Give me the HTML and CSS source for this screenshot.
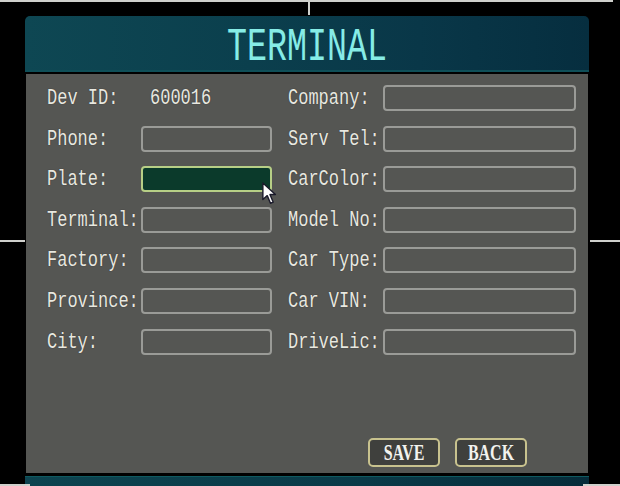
FILE: index.html
```html
<!DOCTYPE html>
<html>
<head>
<meta charset="utf-8">
<link rel="stylesheet" href="styles.css">
</head>
<body>
<div class="screen">
  <div class="panel">
    <div class="header"><span class="title">TERMINAL</span></div>
    <div class="body">
      <div class="form">
        <span class="label">Dev ID:</span><span class="value">600016</span>
        <span class="label">Company:</span><span class="box"></span>

        <span class="label">Phone:</span><span class="box"></span>
        <span class="label">Serv Tel:</span><span class="box"></span>

        <span class="label">Plate:</span><span class="box focus"></span>
        <span class="label">CarColor:</span><span class="box"></span>

        <span class="label">Terminal:</span><span class="box"></span>
        <span class="label">Model No:</span><span class="box"></span>

        <span class="label">Factory:</span><span class="box"></span>
        <span class="label">Car Type:</span><span class="box"></span>

        <span class="label">Province:</span><span class="box"></span>
        <span class="label">Car VIN:</span><span class="box"></span>

        <span class="label">City:</span><span class="box"></span>
        <span class="label">DriveLic:</span><span class="box"></span>
      </div>
      <div class="actions">
        <button class="btn"><span>SAVE</span></button>
        <button class="btn"><span>BACK</span></button>
      </div>
    </div>
    <div class="footer"></div>
  </div>

  <div class="line top"></div>
  <div class="line vtop"></div>
  <div class="line hleft"></div>
  <div class="line hright"></div>
  <div class="line bleft"></div>
  <div class="line bright"></div>

  <svg class="cursor" width="19" height="24" viewBox="0 0 16 22">
    <path d="M1 1 L1 16 L5 12.5 L8 19.5 L10.5 18.5 L7.5 11.5 L12.5 11.5 Z" fill="#ffffff" stroke="#1a1a2a" stroke-width="1.3" stroke-linejoin="round"/>
  </svg>
</div>
</body>
</html>
```

FILE: styles.css
```css
* { box-sizing: border-box; }
html, body {
  margin: 0;
  padding: 0;
  background: #000;
  width: 620px;
  height: 486px;
  overflow: hidden;
}
.screen {
  position: relative;
  width: 620px;
  height: 486px;
  padding: 16px 31px 0 25px;
}
.panel {
  display: flex;
  flex-direction: column;
  width: 564px;
}
.header {
  height: 56px;
  border-radius: 5px 5px 0 0;
  background: linear-gradient(90deg, #0e4753 0%, #0b3f4d 40%, #093748 70%, #062e3f 100%);
  box-shadow: inset 0 -2px 0 #0f4f58;
  display: flex;
  justify-content: center;
  align-items: center;
}
.title {
  display: inline-block;
  font-family: "Liberation Mono", monospace;
  font-size: 33.3px;
  line-height: 1;
  color: #86ece6;
  transform: scaleY(1.4);
  margin-top: 10px;
}
.body {
  margin-top: 2px;
  margin-left: 1px;
  width: 562px;
  height: 399px;
  background: #555653;
  display: flex;
  flex-direction: column;
  padding: 11px 0 6px 21px;
}
.form {
  display: grid;
  grid-template-columns: 94px 131px 111px 193px;
  grid-auto-rows: 26px;
  row-gap: 14.6px;
}
.form > :nth-child(4n+3) { margin-left: 16px; }
.label, .value {
  font-family: "Liberation Mono", monospace;
  font-size: 17px;
  color: #e8e8e0;
  display: flex;
  align-items: center;
  white-space: nowrap;
  text-shadow: 0 0 1px #2a2a2a;
  transform: scaleY(1.27);
}
.value { padding-left: 9px; }
.box {
  border: 2px solid #9a9b97;
  border-radius: 4px;
  background: #555653;
}
.box.focus {
  background: #0b3a2b;
  border-color: #b7cf86;
}
.actions {
  margin-top: auto;
  display: flex;
  gap: 15px;
  padding-left: 321px;
}
.btn {
  width: 72px;
  height: 29px;
  border: 2px solid #c8c28e;
  border-radius: 5px;
  background: #3f403d;
  color: #f2f2ee;
  font-family: "Liberation Serif", serif;
  font-weight: bold;
  font-size: 16px;
  padding: 0;
  display: flex;
  align-items: center;
  justify-content: center;
}
.btn span {
  display: inline-block;
  transform: scaleY(1.4);
  line-height: 1;
  margin-top: 1px;
}
.footer {
  margin-top: 3px;
  height: 12px;
  background: linear-gradient(90deg, #0d4450, #0a3a48 60%, #062c3a);
  border-top: 1px solid #0f5a60;
}
.line {
  position: absolute;
  background: #cfd0cc;
}
.line.top { left: 0; top: 0; width: 613px; height: 2px; }
.line.vtop { left: 308px; top: 0; width: 2px; height: 15px; }
.line.hleft { left: 0; top: 240px; width: 25px; height: 2px; }
.line.hright { left: 590px; top: 240px; width: 30px; height: 2px; }
.line.bleft { left: 0; top: 484px; width: 30px; height: 2px; }
.line.bright { left: 583px; top: 484px; width: 37px; height: 2px; }
.cursor {
  position: absolute;
  left: 261px;
  top: 182px;
}
```
